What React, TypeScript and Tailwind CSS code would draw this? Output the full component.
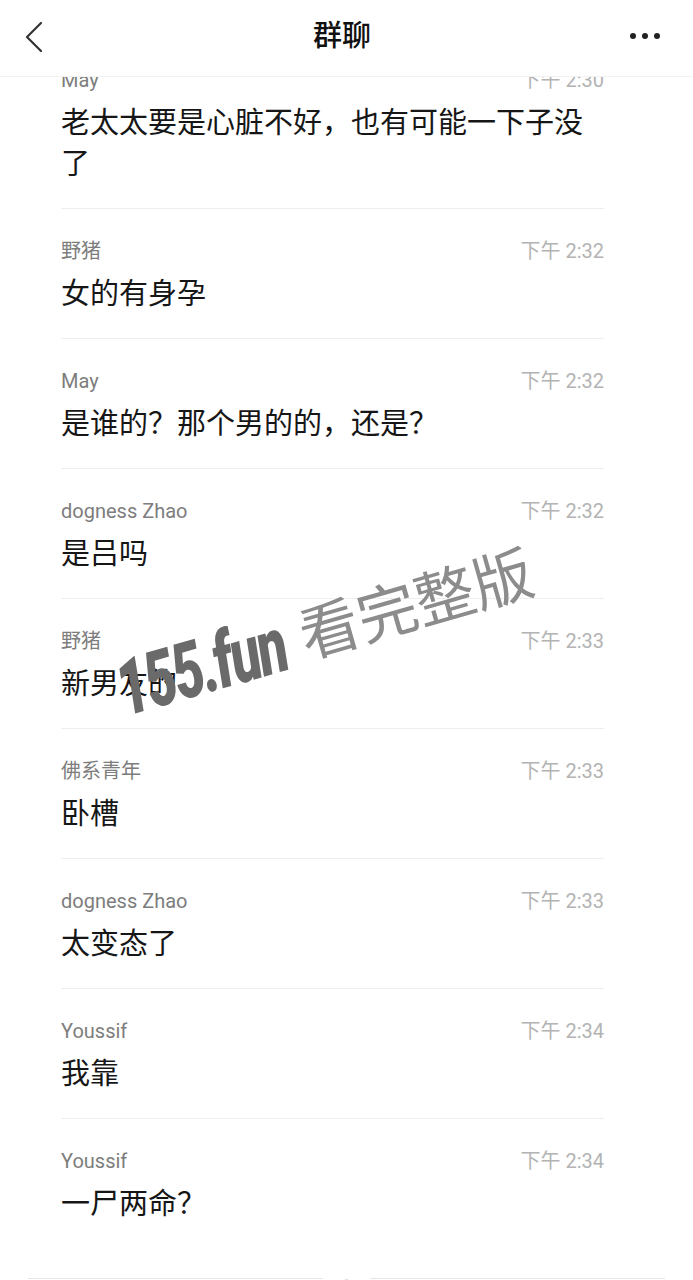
import React from "react";

const font = { fontFamily: "Roboto, 'Noto Sans CJK SC', sans-serif" };

const rows: { name: string; time: string; text: string }[] = [
  { name: "May", time: "下午 2:30", text: "老太太要是心脏不好，也有可能一下子没了" },
  { name: "野猪", time: "下午 2:32", text: "女的有身孕" },
  { name: "May", time: "下午 2:32", text: "是谁的？那个男的的，还是？" },
  { name: "dogness Zhao", time: "下午 2:32", text: "是吕吗" },
  { name: "野猪", time: "下午 2:33", text: "新男友的" },
  { name: "佛系青年", time: "下午 2:33", text: "卧槽" },
  { name: "dogness Zhao", time: "下午 2:33", text: "太变态了" },
  { name: "Youssif", time: "下午 2:34", text: "我靠" },
  { name: "Youssif", time: "下午 2:34", text: "一尸两命？" },
];

export default function App() {
  return (
    <div
      className="relative w-[693px] h-[1280px] overflow-hidden bg-white font-['Roboto','Noto_Sans_CJK_SC',sans-serif]"
      style={font}
    >
      <header className="relative z-10 h-[77px] flex items-center justify-between bg-white border-b border-[#f2f2f2]">
        <div className="w-[80px] pl-[24px] pb-[2px] flex items-center">
          <svg width="20" height="32" viewBox="0 0 20 32" fill="none">
            <path d="M17 2 L3 16 L17 30" stroke="#333" strokeWidth="2.2" strokeLinecap="round" strokeLinejoin="round" />
          </svg>
        </div>
        <div className="text-[29px] leading-[34px] font-medium text-[#111] pb-[4px]">群聊</div>
        <div className="w-[89px] pr-[33px] pb-[4px] flex items-center justify-end gap-[6px]">
          <span className="w-[6px] h-[6px] rounded-full bg-[#222]" />
          <span className="w-[6px] h-[6px] rounded-full bg-[#222]" />
          <span className="w-[6px] h-[6px] rounded-full bg-[#222]" />
        </div>
      </header>

      <div className="overflow-hidden">
        <div className="-mt-[39px]">
          {rows.map((r, i) => (
            <div
              key={i}
              className={
                "ml-[61px] w-[543px] pt-[30px] pb-[23px] " +
                (i < rows.length - 1 ? "border-b border-[#eeeeee]" : "")
              }
            >
              <div className="flex justify-between items-center h-[24px]">
                <span className="text-[20px] leading-[24px] text-[#7d7d7d]">{r.name}</span>
                <span className="text-[20px] leading-[24px] text-[#b3b3b3]">{r.time}</span>
              </div>
              <div className="mt-[11px] text-[29px] leading-[41px] text-[#161616]">{r.text}</div>
            </div>
          ))}
          <div className="mt-[25px] flex items-center">
            <div className="ml-[28px] w-[295px] h-px bg-[#e6e6e6]" />
            <div className="ml-[21px] w-[5px] h-[5px] rounded-full bg-[#e0e0e0] mt-[6px]" />
            <div className="ml-[21px] w-[295px] h-px bg-[#e6e6e6]" />
          </div>
        </div>
      </div>

      <div className="absolute left-[128px] top-[655px] z-20 flex items-end -rotate-[16deg] origin-bottom-left whitespace-nowrap pointer-events-none">
        <span className="text-[78px] leading-[70px] font-black italic text-[#6a6a6a] tracking-[-3px] inline-block scale-x-[0.7] origin-left -mr-[64px]">
          155.fun
        </span>
        <span className="ml-[8px] text-[60px] leading-[70px] text-[#8c8c8c]">看完整版</span>
      </div>
    </div>
  );
}
